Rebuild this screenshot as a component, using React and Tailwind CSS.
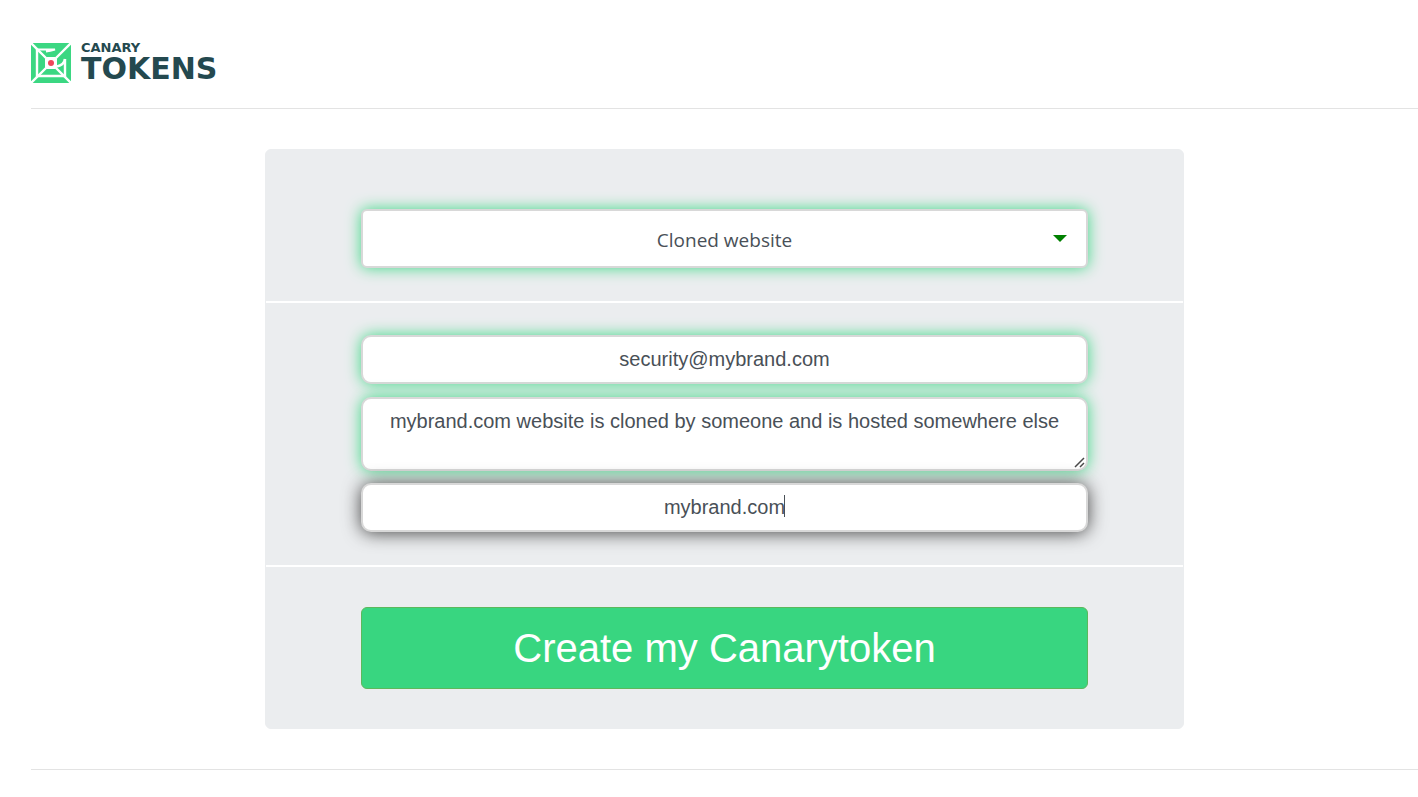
import React, { useState } from 'react';

const fieldClass = "block w-full rounded-[10px] border-2 border-[#d8d8d8] bg-white px-3 text-center text-[20px] leading-7 text-[#495057] outline-none";
const greenGlow = "shadow-[0_0_15px_#40d887]";

function Logo() {
    return (
        <a href="#" className="inline-flex items-start gap-2.5 text-[#24494f]">
            <svg viewBox="0 0 40 40" className="h-10 w-10" aria-hidden="true">
                <rect width="40" height="40" rx="1" fill="#3bd782" />
                <g fill="none" stroke="#fff" strokeWidth="2.4">
                    <path d="M0 0L16 16M40 0L24 16M0 40L16 24M40 40L24 24" />
                    <path d="M6 6V33H34V16" />
                    <path d="M34 16Q33 22 26 23.5" />
                    <path d="M6 6.5H24Q19 8 15 8.5" strokeWidth="2" />
                </g>
                <path d="M16 14H24L26 16V24L24 26H16L14 24V16Z" fill="#fff" />
                <circle cx="20" cy="20" r="3" fill="#f0475b" />
            </svg>
            <span className="flex flex-col font-['DejaVu_Sans',sans-serif]">
                <span className="text-[13px] leading-[10px] font-bold">CANARY</span>
                <span className="text-[30px] leading-8 font-bold">TOKENS</span>
            </span>
        </a>
    );
}

export default function App() {
    const [tokenType, setTokenType] = useState("cloned");
    const [email, setEmail] = useState("security@mybrand.com");
    const [memo, setMemo] = useState("mybrand.com website is cloned by someone and is hosted somewhere else");
    const [domain, setDomain] = useState("mybrand.com");

    return (
        <div className="min-h-screen bg-white pl-[31px] font-['Liberation_Sans',Arial,sans-serif]">
            <header className="flex h-[109px] items-start border-b border-[#e3e3e3] pt-[43px]">
                <Logo />
            </header>

            <main className="border-b border-[#e3e3e3] py-10">
                <form onSubmit={e => e.preventDefault()} className="mx-auto max-w-[919px] rounded-md border border-[#ebedef] bg-[#ebedef]">
                    <div className="border-b-2 border-white px-[95px] pt-[59px] pb-[33px]">
                        <div className="relative">
                            <select
                                aria-label="Token type"
                                value={tokenType}
                                onChange={e => setTokenType(e.target.value)}
                                className={`block h-[59px] w-full appearance-none rounded-md border-2 border-[#d8d8d8] bg-white pt-1 text-center font-['Open_Sans',sans-serif] text-[19px] text-[#495057] outline-none ${greenGlow}`}
                            >
                                <option value="cloned">Cloned website</option>
                            </select>
                            <svg viewBox="0 0 14 7" className="pointer-events-none absolute top-[26px] right-[21px] h-[7px] w-3.5" aria-hidden="true">
                                <path d="M0 0H14L7 7Z" fill="green" />
                            </svg>
                        </div>
                    </div>

                    <div className="flex flex-col border-b-2 border-white px-[95px] pt-8 pb-[33px]">
                        <input
                            type="email"
                            aria-label="Email"
                            value={email}
                            onChange={e => setEmail(e.target.value)}
                            className={`h-[49px] ${fieldClass} ${greenGlow}`}
                        />
                        <div className="relative mt-[13px]">
                            <textarea
                                aria-label="Reminder note"
                                value={memo}
                                onChange={e => setMemo(e.target.value)}
                                className={`h-[74px] resize-none py-2 ${fieldClass} ${greenGlow}`}
                            />
                            <svg viewBox="0 0 11 11" className="pointer-events-none absolute right-[3px] bottom-[3px] h-[11px] w-[11px]" aria-hidden="true">
                                <path d="M1 10L10 1M6 10L10 6" stroke="#4a4a4a" strokeWidth="1.5" fill="none" />
                            </svg>
                        </div>
                        <div className="relative mt-3">
                            <input
                                type="text"
                                aria-label="Domain"
                                value={domain}
                                onChange={e => setDomain(e.target.value)}
                                className={`h-[49px] ${fieldClass} shadow-[0_1px_18px_#444444]`}
                            />
                            <span className="pointer-events-none absolute top-3 left-1/2 ml-[59px] h-[22px] w-px bg-[#495057]" />
                        </div>
                    </div>

                    <div className="px-[95px] pt-10 pb-[39px]">
                        <button type="submit" className="h-[82px] w-full rounded-md border border-[#5cb85c] bg-[#38d680] text-[40px] text-white">
                            Create my Canarytoken
                        </button>
                    </div>
                </form>
            </main>
        </div>
    );
}
